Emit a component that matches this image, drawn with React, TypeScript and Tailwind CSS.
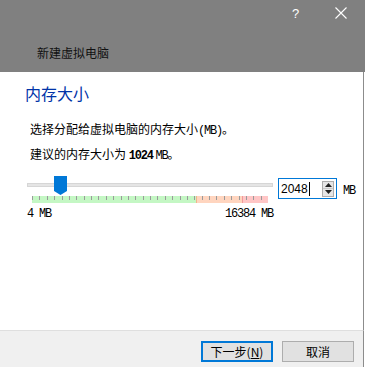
import React from 'react';

const cjk = "font-['Noto_Sans_CJK_SC','Microsoft_YaHei',sans-serif]";

// Latin runs of the dialog font look like SimSun half-width glyphs
function Lat({ children, bold }: { children: React.ReactNode; bold?: boolean }) {
  return (
    <span className={`font-['Liberation_Mono',monospace] text-[12px] tracking-[-1.2px] ${bold ? 'font-bold' : ''}`}>
      {children}
    </span>
  );
}

function TickBand() {
  const w = 236;
  const ticks = Array.from({ length: 33 }, (_, i) => Math.round(i * (w / 32)) + 0.5);
  return (
    <svg width={w} height={7} className="block">
      <rect x={0} y={0} width={164} height={7} fill="#c4f7c4" />
      <rect x={164} y={0} width={46} height={7} fill="#ffd5bf" />
      <rect x={210} y={0} width={26} height={7} fill="#ffc6c6" />
      <line x1={164.5} y1={0} x2={164.5} y2={7} stroke="#f0b48c" />
      <line x1={210.5} y1={0} x2={210.5} y2={7} stroke="#f09a9a" />
      {ticks.map((x, i) => (
        <line key={i} x1={x} y1={0} x2={x} y2={4} stroke="#9a9a9a" />
      ))}
    </svg>
  );
}

export default function App() {
  return (
    <div className={`w-[365px] h-[367px] bg-white flex flex-col overflow-hidden text-[12px] text-black ${cjk}`}>
      {/* 标题栏 */}
      <div className="h-[72px] bg-[#808080] flex flex-col shrink-0">
        <div className="h-[26px] flex justify-end items-center pr-[2px]">
          <div className="w-[45px] flex justify-center text-white text-[13px] leading-none font-['Liberation_Sans',sans-serif]">?</div>
          <div className="w-[45px] flex justify-center">
            <svg width="12" height="12" viewBox="0 0 12 12">
              <path d="M0.5 0.5 L11.5 11.5 M11.5 0.5 L0.5 11.5" stroke="#ffffff" strokeWidth="1.1" />
            </svg>
          </div>
        </div>
        <div className="mt-[19px] pl-[37px] leading-[16px] text-[#111]">新建虚拟电脑</div>
      </div>

      {/* 内容 */}
      <div className="flex-1 flex flex-col mr-[1px] border-r border-[#8c8c8c]">
        <div className="pt-[11px] pl-[25px] text-[16px] leading-[20px] text-[#0033a8]">内存大小</div>
        <div className="mt-[18px] pl-[30px] leading-[16px]">
          选择分配给虚拟电脑的内存大小<Lat>(MB)</Lat>。
        </div>
        <div className="mt-[7px] pl-[30px] leading-[16px]">
          建议的内存大小为 <Lat bold>1024</Lat> <Lat>MB</Lat>。
        </div>

        <div className="mt-[12px] pl-[27px] flex items-start">
          <div className="w-[246px] flex flex-col">
            <div className="relative h-[20px]">
              <div className="mt-[7px] h-[4px] bg-[#e5e5e5] border border-[#d6d6d6]" />
              <svg width="13" height="19" viewBox="0 0 13 19" className="absolute left-[27px] top-0">
                <polygon points="0,0 13,0 13,15 6.5,19 0,15" fill="#0078d7" />
              </svg>
            </div>
            <div className="ml-[5px]">
              <TickBand />
            </div>
            <div className="mt-[4px] flex justify-between leading-[15px]">
              <Lat>4 MB</Lat>
              <Lat>16384 MB</Lat>
            </div>
          </div>

          <div className="ml-[5px] mt-[2px] w-[59px] h-[21px] border border-[#0078d7] flex items-center justify-between pl-[2px] pr-[2px]">
            <div className="flex items-center font-['Liberation_Sans',sans-serif] text-[12px] leading-none">
              2048<span className="w-[1px] h-[14px] bg-black ml-[1px]" />
            </div>
            <div className="w-[12px] h-[16px] border border-[#adadad] bg-[#e6e6e6] flex flex-col">
              <div className="flex-1 flex items-center justify-center border-b border-[#c8c8c8]">
                <svg width="7" height="4" viewBox="0 0 7 4"><polygon points="3.5,0 7,4 0,4" fill="#222" /></svg>
              </div>
              <div className="flex-1 flex items-center justify-center">
                <svg width="7" height="4" viewBox="0 0 7 4"><polygon points="0,0 7,0 3.5,4" fill="#222" /></svg>
              </div>
            </div>
          </div>
          <div className="ml-[6px] mt-[5px] leading-[15px]">
            <Lat>MB</Lat>
          </div>
        </div>
      </div>

      {/* 按钮栏 */}
      <div className="h-[37px] shrink-0 bg-[#f0f0f0] border-t border-[#dfdfdf] mr-[1px] border-r border-r-[#8c8c8c] flex justify-end items-start pt-[10px] pr-[9px] gap-[9px]">
        <button className="w-[72px] h-[21px] bg-[#e1e1e1] border-2 border-[#0078d7] flex items-center justify-center leading-none">
          下一步(<span className="underline">N</span>)
        </button>
        <button className="w-[72px] h-[21px] bg-[#e1e1e1] border border-[#adadad] flex items-center justify-center leading-none">
          取消
        </button>
      </div>
    </div>
  );
}
